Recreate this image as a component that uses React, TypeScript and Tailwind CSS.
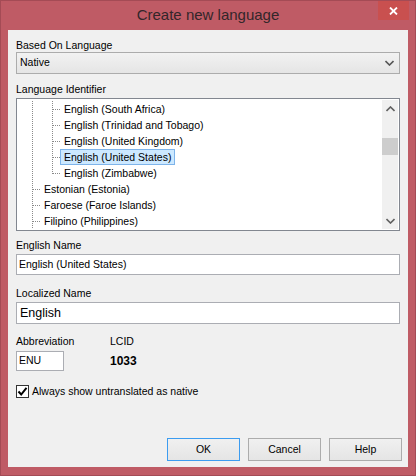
import { FC } from "react";

type Row = { label: string; level: 1 | 2; selected?: boolean; last?: boolean };

const rows: Row[] = [
  { label: "English (South Africa)", level: 2 },
  { label: "English (Trinidad and Tobago)", level: 2 },
  { label: "English (United Kingdom)", level: 2 },
  { label: "English (United States)", level: 2, selected: true },
  { label: "English (Zimbabwe)", level: 2, last: true },
  { label: "Estonian (Estonia)", level: 1 },
  { label: "Faroese (Faroe Islands)", level: 1 },
  { label: "Filipino (Philippines)", level: 1 },
];

// dotted connector lines of the tree, one piece per row
const Connector: FC<{ level: 1 | 2; last?: boolean }> = ({ level, last }) => {
  const dots = { stroke: "#8a8a8a", strokeWidth: 1, strokeDasharray: "1 1", shapeRendering: "crispEdges" as const };
  if (level === 1) {
    return (
      <svg width="22" height="16" className="shrink-0">
        <line x1="14.5" y1="0" x2="14.5" y2="16" {...dots} />
        <line x1="15" y1="8.5" x2="23" y2="8.5" {...dots} />
      </svg>
    );
  }
  return (
    <svg width="42" height="16" className="shrink-0">
      <line x1="14.5" y1="0" x2="14.5" y2="16" {...dots} />
      <line x1="34.5" y1="0" x2="34.5" y2={last ? 9 : 16} {...dots} />
      <line x1="35" y1="8.5" x2="43" y2="8.5" {...dots} />
    </svg>
  );
};

const Chevron: FC<{ up?: boolean; color?: string }> = ({ up, color = "#606060" }) => (
  <svg width="9" height="6" viewBox="0 0 9 6">
    <path
      d={up ? "M0.5 5 L4.5 1 L8.5 5" : "M0.5 1 L4.5 5 L8.5 1"}
      fill="none"
      stroke={color}
      strokeWidth="1.6"
    />
  </svg>
);

const App: FC = () => {
  return (
    <div className="w-[416px] h-[476px] bg-[#bf5b65] border border-[#a44b55] flex flex-col font-['Liberation_Sans',Arial,sans-serif] text-[10.5px] text-black">
      {/* Title bar */}
      <div className="h-[29px] grid grid-cols-[1fr_auto_1fr] items-start">
        <div />
        <div className="pt-[4px] text-[15px] leading-[20px] text-[#33262a]">Create new language</div>
        <div className="flex justify-end pr-[6px]">
          <div className="w-[31px] h-[19px] bg-[#c9504f] flex items-center justify-center">
            <svg width="9" height="8" viewBox="0 0 9 8">
              <path d="M1 0.5 L8 7.5 M8 0.5 L1 7.5" stroke="white" strokeWidth="1.8" />
            </svg>
          </div>
        </div>
      </div>

      {/* Client area */}
      <div className="mx-[7px] mb-[8px] flex-1 bg-[#f0f0f0] px-[8px] flex flex-col">
        <div className="mt-[8px] h-[14px] leading-[14px]">Based On Language</div>
        <div className="h-[22px] border border-[#acacac] bg-gradient-to-b from-[#f2f2f2] to-[#e5e5e5] flex items-center pl-[3px] pr-[5px]">
          <span className="flex-1">Native</span>
          <Chevron color="#555555" />
        </div>

        <div className="mt-[8px] h-[14px] leading-[14px]">Language Identifier</div>
        <div className="mt-[2px] h-[133px] border border-[#828790] bg-white flex p-[1px]">
          <div className="flex-1 flex flex-col pt-[1px] overflow-hidden">
            {rows.map((r) => (
              <div key={r.label} className="h-[16px] flex items-center whitespace-nowrap">
                <Connector level={r.level} last={r.last} />
                <span
                  className={
                    r.selected
                      ? "h-[16px] leading-[14px] px-[3px] border border-[#7eb4ea] bg-[#cce8ff]"
                      : "h-[16px] leading-[14px] px-[3px] border border-transparent"
                  }
                >
                  {r.label}
                </span>
              </div>
            ))}
          </div>
          <div className="w-[16px] bg-[#f0f0f0] flex flex-col">
            <div className="h-[17px] flex items-center justify-center">
              <Chevron up />
            </div>
            <div className="mt-[21px] h-[17px] bg-[#cdcdcd]" />
            <div className="flex-1" />
            <div className="h-[17px] flex items-center justify-center">
              <Chevron />
            </div>
          </div>
        </div>

        <div className="mt-[7px] h-[14px] leading-[14px]">English Name</div>
        <div className="mt-[2px] h-[21px] border border-[#abadb3] bg-white flex items-center px-[2px]">
          English (United States)
        </div>

        <div className="mt-[11px] h-[14px] leading-[14px]">Localized Name</div>
        <div className="mt-[2px] h-[22px] border border-[#abadb3] bg-white flex items-center px-[3px] text-[12.5px]">
          English
        </div>

        <div className="mt-[10px] grid grid-cols-[94px_1fr]">
          <div className="h-[14px] leading-[14px]">Abbreviation</div>
          <div className="h-[14px] leading-[14px]">LCID</div>
          <div className="mt-[3px] w-[48px] h-[20px] border border-[#abadb3] bg-white flex items-center px-[2px]">
            ENU
          </div>
          <div className="mt-[3px] h-[20px] flex items-center font-bold text-[12px]">1033</div>
        </div>

        <div className="mt-[13px] flex items-center gap-[3px]">
          <div className="w-[13px] h-[13px] border border-[#333333] bg-white flex items-center justify-center">
            <svg width="11" height="11" viewBox="0 0 11 11">
              <path d="M1.5 5.5 L4.2 8.5 L9.5 1.8" fill="none" stroke="black" strokeWidth="2" />
            </svg>
          </div>
          <span className="leading-[14px]">Always show untranslated as native</span>
        </div>

        <div className="flex-1" />

        <div className="mb-[6px] -mr-[2px] flex justify-end gap-[8px]">
          <button className="w-[73px] h-[23px] border border-[#3c9cf0] bg-gradient-to-b from-[#f0f0f0] to-[#e5e5e5]">
            OK
          </button>
          <button className="w-[73px] h-[23px] border border-[#acacac] bg-gradient-to-b from-[#f0f0f0] to-[#e5e5e5]">
            Cancel
          </button>
          <button className="w-[73px] h-[23px] border border-[#acacac] bg-gradient-to-b from-[#f0f0f0] to-[#e5e5e5]">
            Help
          </button>
        </div>
      </div>
    </div>
  );
};

export default App;
